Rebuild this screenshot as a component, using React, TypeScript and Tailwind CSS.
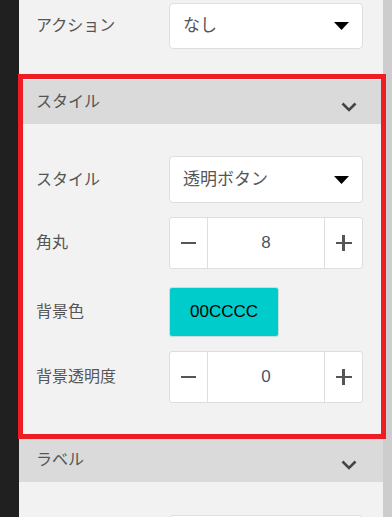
import { ReactNode } from 'react';

const font = { fontFamily: '"Liberation Sans", "Noto Sans CJK JP", sans-serif' };

function Caret() {
  return (
    <svg width="15" height="8" viewBox="0 0 15 8">
      <polygon points="0,0 15,0 7.5,8" fill="#000" />
    </svg>
  );
}

function Chevron() {
  return (
    <svg width="16" height="10" viewBox="0 0 16 10">
      <polyline points="1.5,1.5 8,8 14.5,1.5" fill="none" stroke="#444" strokeWidth="2.6" />
    </svg>
  );
}

function Row({ label, children, className }: { label: string; children: ReactNode; className?: string }) {
  return (
    <div className={`flex items-center ${className ?? ''}`}>
      <div className="w-[150px] pl-[17px] text-[16px] text-[#555]">{label}</div>
      {children}
    </div>
  );
}

function Select({ value, className }: { value: string; className?: string }) {
  return (
    <div
      className={`flex w-[194px] items-center justify-between rounded-[4px] border border-[#dedede] bg-white pl-[13px] pr-[13px] ${className ?? ''}`}
    >
      <span className="text-[17px] text-[#555]">{value}</span>
      <Caret />
    </div>
  );
}

function Stepper({ value }: { value: string }) {
  return (
    <div className="flex h-[52px] w-[194px] rounded-[3px] border border-[#dedede] bg-white">
      <div className="flex w-[38px] items-center justify-center border-r border-[#dedede]">
        <div className="h-[2.5px] w-[15px] bg-[#555]"></div>
      </div>
      <div className="flex flex-1 items-center justify-center text-[17px] text-[#4a5568]">{value}</div>
      <div className="relative flex w-[38px] items-center justify-center border-l border-[#dedede]">
        <div className="h-[2.5px] w-[16px] bg-[#555]"></div>
        <div className="absolute h-[16px] w-[2.5px] bg-[#555]"></div>
      </div>
    </div>
  );
}

function Header({ title }: { title: string }) {
  return (
    <div className="flex h-[44px] items-center justify-between bg-[#dadada] pl-[17px] pr-[26px]">
      <span className="text-[16px] text-[#555]">{title}</span>
      <div className="mt-[10px]">
        <Chevron />
      </div>
    </div>
  );
}

export default function App() {
  return (
    <div className="relative flex h-[517px] w-[392px] overflow-hidden" style={font}>
      <div className="w-[19px] bg-[#202020]"></div>
      <div className="flex-1 bg-[#f2f2f2]">
        <Row label="アクション" className="mt-[3px]">
          <Select value="なし" className="h-[46px]" />
        </Row>

        <div className="mt-[31px]">
          <Header title="スタイル" />
        </div>

        <div className="pt-[32px] pb-[35px]">
          <Row label="スタイル">
            <Select value="透明ボタン" className="h-[47px]" />
          </Row>
          <Row label="角丸" className="mt-[14px]">
            <Stepper value="8" />
          </Row>
          <Row label="背景色" className="mt-[18px]">
            <div className="flex h-[50px] w-[110px] items-center justify-center rounded-[3px] border border-[#c8dede] bg-[#00cccc] text-[17px] text-black">
              00CCCC
            </div>
          </Row>
          <Row label="背景透明度" className="mt-[14px]">
            <Stepper value="0" />
          </Row>
        </div>

        <Header title="ラベル" />

        <div className="pt-[33px]">
          <Row label="">
            <Select value="" className="h-[46px]" />
          </Row>
        </div>
      </div>
      <div className="w-[9px] bg-[#cdcdcd]"></div>

      <div className="pointer-events-none absolute left-[18px] top-[74px] h-[365px] w-[368px] border-[5px] border-[#ee1c25]"></div>
    </div>
  );
}
